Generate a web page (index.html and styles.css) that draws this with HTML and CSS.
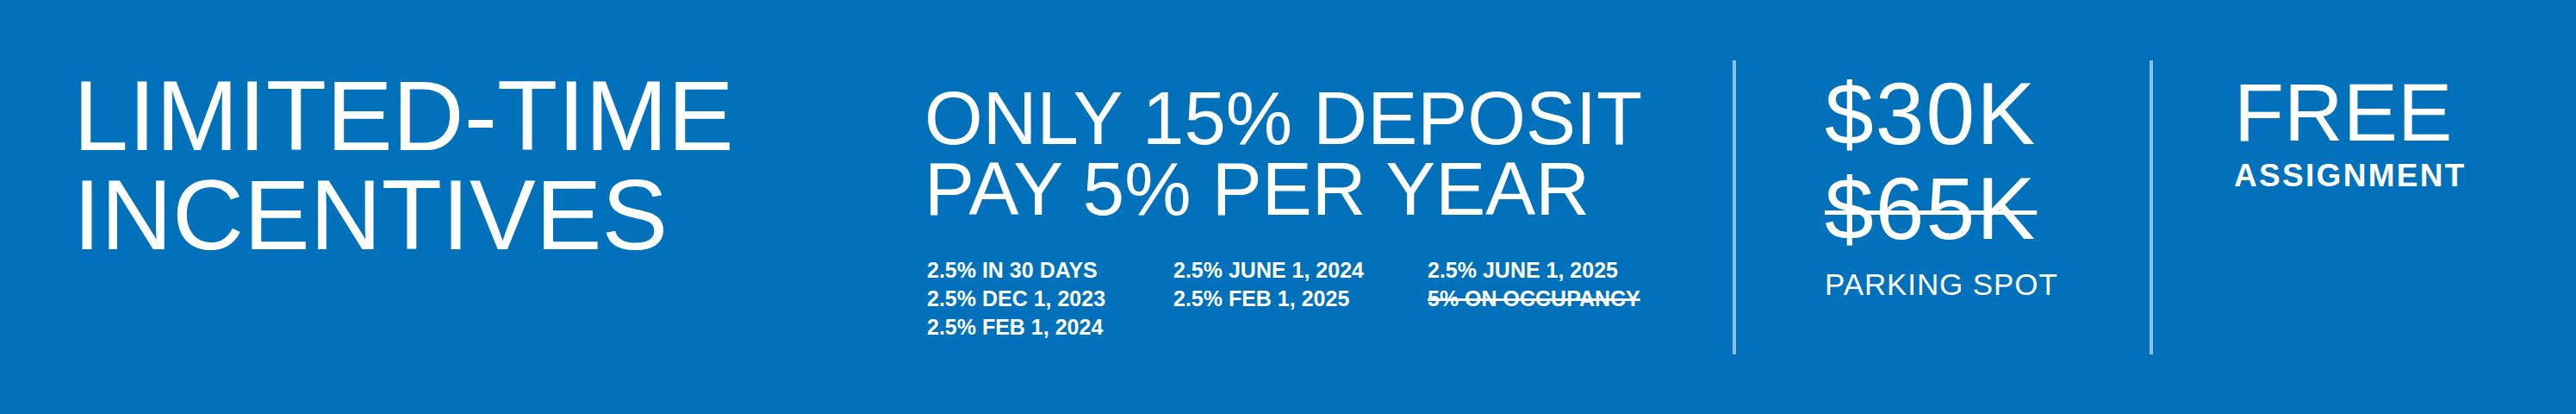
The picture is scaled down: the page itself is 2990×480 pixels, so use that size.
FILE: index.html
```html
<!DOCTYPE html>
<html lang="en">
<head>
<meta charset="utf-8">
<title>Limited-Time Incentives</title>
<link rel="stylesheet" href="styles.css">
</head>
<body>
<section class="banner">
  <div class="col-title">
    <h1 class="title">LIMITED-TIME<br>INCENTIVES</h1>
  </div>
  <div class="col-deposit">
    <h2 class="deposit-head">ONLY 15% DEPOSIT<br>PAY 5% PER YEAR</h2>
    <div class="schedule">
      <ul class="sched-col">
        <li>2.5% IN 30 DAYS</li>
        <li>2.5% DEC 1, 2023</li>
        <li>2.5% FEB 1, 2024</li>
      </ul>
      <ul class="sched-col">
        <li>2.5% JUNE 1, 2024</li>
        <li>2.5% FEB 1, 2025</li>
      </ul>
      <ul class="sched-col">
        <li>2.5% JUNE 1, 2025</li>
        <li class="struck">5% ON OCCUPANCY</li>
      </ul>
    </div>
  </div>
  <div class="divider"></div>
  <div class="col-parking">
    <div class="price">$30K</div>
    <div class="price old">$65K</div>
    <div class="parking-label">PARKING SPOT</div>
  </div>
  <div class="divider"></div>
  <div class="col-free">
    <div class="free">FREE</div>
    <div class="free-label">ASSIGNMENT</div>
  </div>
</section>
</body>
</html>
```

FILE: styles.css
```css
* {
  box-sizing: border-box;
}

html, body {
  margin: 0;
  padding: 0;
  background: #0071ba;
}

body {
  font-family: "Liberation Sans", Arial, Helvetica, sans-serif;
  color: #ffffff;
}

.banner {
  width: 2990px;
  height: 480px;
  background: #0071ba;
  display: flex;
  align-items: flex-start;
  padding: 70px 0 0 85px;
}

.col-title {
  width: 988px;
  flex: none;
  margin-top: 7px;
}

.title {
  margin: 0;
  font-size: 115px;
  line-height: 115px;
  font-weight: 400;
}

.col-deposit {
  width: 938px;
  flex: none;
  margin-top: 26px;
}

.deposit-head {
  margin: 0;
  font-size: 87px;
  line-height: 82px;
  font-weight: 400;
}

.schedule {
  display: grid;
  grid-template-columns: 286px 295px auto;
  margin-top: 37px;
  padding-left: 3px;
}

.sched-col {
  list-style: none;
  margin: 0;
  padding: 0;
  font-size: 25px;
  line-height: 33px;
  font-weight: 700;
  white-space: nowrap;
}

.struck {
  text-decoration: line-through;
  text-decoration-thickness: 3px;
}

.divider {
  width: 4px;
  height: 341px;
  flex: none;
  background: rgba(255, 255, 255, 0.55);
}

.col-parking {
  width: 480px;
  flex: none;
  padding-left: 103px;
  margin-top: 7px;
}

.price {
  font-size: 102px;
  line-height: 110px;
  letter-spacing: 2px;
  white-space: nowrap;
}

.price.old {
  display: inline-block;
  text-decoration: line-through;
  text-decoration-thickness: 5px;
}

.parking-label {
  margin-top: 13px;
  font-size: 35px;
  line-height: 40px;
  letter-spacing: 0.9px;
  white-space: nowrap;
}

.col-free {
  flex: none;
  padding-left: 94px;
  margin-top: 7px;
}

.free {
  font-size: 95px;
  line-height: 107px;
}

.free-label {
  font-size: 37px;
  line-height: 40px;
  font-weight: 700;
  letter-spacing: 2.3px;
  white-space: nowrap;
}
```
